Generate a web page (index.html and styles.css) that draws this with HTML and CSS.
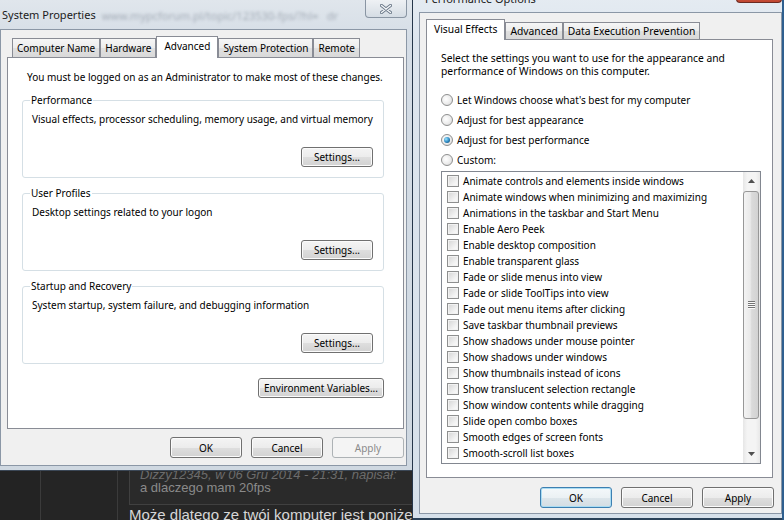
FILE: index.html
```html
<!DOCTYPE html>
<html lang="en">
<head>
  <meta charset="UTF-8" />
  <meta name="viewport" content="width=device-width, initial-scale=1.0" />
  <title>System Properties</title>
  <link rel="stylesheet" href="styles.css">
</head>
<body>
  <div class="desktop">
    <!-- forum page behind the dialogs -->
    <div class="forum">
      <div class="forum-col forum-col-a"></div>
      <div class="forum-col forum-col-b"></div>
      <div class="forum-post">
        <div class="quote">
          <p class="quote-by">Dizzy12345, w 06 Gru 2014 - 21:31, napisał:</p>
          <p class="quote-text">a dlaczego mam 20fps</p>
        </div>
        <p class="post-text">Może dlatego ze twój komputer jest poniżej normy</p>
      </div>
    </div>

    <!-- System Properties (inactive) -->
    <div class="win win-sys">
      <div class="titlebar">
        <span class="title">System Properties</span>
        <span class="glass-text">www.mypcforum.pl/topic/123530-fps/?hl=  &nbsp; dr</span>
        <span class="close close-inactive">
          <svg width="12" height="10" viewBox="0 0 12 10">
            <path d="M1.5 1.5 L10.5 8.5 M10.5 1.5 L1.5 8.5" stroke="#6b7888" stroke-width="3.2" stroke-linecap="round" fill="none"/>
            <path d="M1.5 1.5 L10.5 8.5 M10.5 1.5 L1.5 8.5" stroke="#f5f7f9" stroke-width="1.4" stroke-linecap="round" fill="none"/>
          </svg>
        </span>
      </div>
      <div class="client">
        <div class="tabs">
          <span class="tab">Computer Name</span>
          <span class="tab">Hardware</span>
          <span class="tab active">Advanced</span>
          <span class="tab">System Protection</span>
          <span class="tab">Remote</span>
        </div>
        <div class="panel panel-sys">
          <p class="note">You must be logged on as an Administrator to make most of these changes.</p>

          <fieldset class="group">
            <legend>Performance</legend>
            <p>Visual effects, processor scheduling, memory usage, and virtual memory</p>
            <div class="group-actions"><button class="btn">Settings...</button></div>
          </fieldset>

          <fieldset class="group">
            <legend>User Profiles</legend>
            <p>Desktop settings related to your logon</p>
            <div class="group-actions"><button class="btn">Settings...</button></div>
          </fieldset>

          <fieldset class="group">
            <legend>Startup and Recovery</legend>
            <p>System startup, system failure, and debugging information</p>
            <div class="group-actions"><button class="btn">Settings...</button></div>
          </fieldset>

          <div class="env-row"><button class="btn btn-wide">Environment Variables...</button></div>
        </div>
        <div class="dialog-buttons">
          <button class="btn btn-dlg">OK</button>
          <button class="btn btn-dlg">Cancel</button>
          <button class="btn btn-dlg" disabled>Apply</button>
        </div>
      </div>
    </div>

    <!-- Performance Options (active) -->
    <div class="win win-perf">
      <div class="titlebar">
        <span class="title">Performance Options</span>
        <span class="close close-active"></span>
      </div>
      <div class="client">
        <div class="tabs">
          <span class="tab active">Visual Effects</span>
          <span class="tab">Advanced</span>
          <span class="tab">Data Execution Prevention</span>
        </div>
        <div class="panel panel-perf">
          <p class="intro">Select the settings you want to use for the appearance and<br>performance of Windows on this computer.</p>

          <div class="options">
            <div class="option"><span class="radio"></span>Let Windows choose what's best for my computer</div>
            <div class="option"><span class="radio"></span>Adjust for best appearance</div>
            <div class="option"><span class="radio on"></span>Adjust for best performance</div>
            <div class="option"><span class="radio"></span>Custom:</div>
          </div>

          <div class="listbox">
            <div class="list-items">
              <div class="item"><span class="check"></span>Animate controls and elements inside windows</div>
              <div class="item"><span class="check"></span>Animate windows when minimizing and maximizing</div>
              <div class="item"><span class="check"></span>Animations in the taskbar and Start Menu</div>
              <div class="item"><span class="check"></span>Enable Aero Peek</div>
              <div class="item"><span class="check"></span>Enable desktop composition</div>
              <div class="item"><span class="check"></span>Enable transparent glass</div>
              <div class="item"><span class="check"></span>Fade or slide menus into view</div>
              <div class="item"><span class="check"></span>Fade or slide ToolTips into view</div>
              <div class="item"><span class="check"></span>Fade out menu items after clicking</div>
              <div class="item"><span class="check"></span>Save taskbar thumbnail previews</div>
              <div class="item"><span class="check"></span>Show shadows under mouse pointer</div>
              <div class="item"><span class="check"></span>Show shadows under windows</div>
              <div class="item"><span class="check"></span>Show thumbnails instead of icons</div>
              <div class="item"><span class="check"></span>Show translucent selection rectangle</div>
              <div class="item"><span class="check"></span>Show window contents while dragging</div>
              <div class="item"><span class="check"></span>Slide open combo boxes</div>
              <div class="item"><span class="check"></span>Smooth edges of screen fonts</div>
              <div class="item"><span class="check"></span>Smooth-scroll list boxes</div>
            </div>
            <div class="scrollbar">
              <div class="sb-arrow">
                <svg width="7" height="4" viewBox="0 0 7 4"><polygon points="0,4 3.5,0 7,4" fill="#505050"/></svg>
              </div>
              <div class="sb-thumb">
                <svg width="7" height="8" viewBox="0 0 7 8">
                  <path d="M0 0.5 H7 M0 2.5 H7 M0 4.5 H7 M0 6.5 H7" stroke="#747474" stroke-width="1"/>
                  <path d="M0 1.5 H7 M0 3.5 H7 M0 5.5 H7 M0 7.5 H7" stroke="#fafafa" stroke-width="1"/>
                </svg>
              </div>
              <div class="sb-track"></div>
              <div class="sb-arrow">
                <svg width="7" height="4" viewBox="0 0 7 4"><polygon points="0,0 3.5,4 7,0" fill="#505050"/></svg>
              </div>
            </div>
          </div>
        </div>
        <div class="dialog-buttons">
          <button class="btn btn-dlg btn-default">OK</button>
          <button class="btn btn-dlg">Cancel</button>
          <button class="btn btn-dlg">Apply</button>
        </div>
      </div>
    </div>
  </div>
</body>
</html>
```

FILE: styles.css
```css
* {
  box-sizing: border-box;
}
html, body {
  margin: 0;
  height: 100%;
}
body {
  font-family: "Noto Sans", "Open Sans", sans-serif;
  font-size: 10px;
  color: #000;
  background: #262626;
  overflow: hidden;
}
p {
  margin: 0;
}
.desktop {
  position: relative;
  width: 784px;
  height: 520px;
  overflow: hidden;
}

/* forum behind */
.forum {
  display: flex;
  height: 100%;
  font-family: "Liberation Sans", Arial, sans-serif;
}
.forum-col-a {
  width: 41px;
  background: #232323;
  border-right: 1px solid #3b3b3b;
}
.forum-col-b {
  width: 77px;
  background: #252525;
  border-right: 1px solid #3b3b3b;
}
.forum-post {
  flex: 1;
  padding: 460px 0 0 11px;
  white-space: nowrap;
}
.quote {
  border: 1px solid #404040;
  background: #2a2a2a;
  padding: 7px 10px 10px;
  font-size: 13px;
  line-height: 13px;
}
.quote-by {
  font-style: italic;
  color: #6c6c6c;
}
.quote-text {
  color: #8a8a8a;
}
.post-text {
  margin-top: 1px;
  font-size: 15px;
  line-height: 18px;
  color: #d6d6d6;
}

/* window frames */
.win {
  position: absolute;
  display: flex;
  flex-direction: column;
}
.win-sys {
  left: -6px;
  top: -1px;
  width: 419px;
  height: 472px;
  padding: 0 5px 4px 5px;
  border: 1px solid #3b4756;
  background: linear-gradient(#e0e6ec, #d5dde6 40px, #cfd8e1);
}
.win-perf {
  left: 412px;
  top: -18px;
  width: 372px;
  height: 545px;
  padding: 0 0 3px 6px;
  border: 1px solid #25364a;
  border-right: 2px solid #2e5f8f;
  border-bottom: 9px solid #2a4158;
  background: linear-gradient(#e7edf3, #dde5ee 60px, #d6e0ea);
}
.titlebar {
  display: flex;
  align-items: flex-start;
  height: 29px;
  flex: none;
}
.title {
  font-size: 11px;
  line-height: 15px;
  color: #1b1b1b;
  white-space: nowrap;
}
.win-sys .title {
  margin: 7px 0 0 2px;
}
.win-perf .title {
  margin: 8px 0 0 6px;
}
.glass-text {
  flex: 1;
  min-width: 0;
  overflow: hidden;
  margin: 8px 8px 0 6px;
  font-size: 11px;
  line-height: 15px;
  color: rgba(60, 72, 88, 0.35);
  filter: blur(1.4px);
  white-space: nowrap;
}
.close {
  margin-left: auto;
  flex: none;
  display: flex;
  align-items: center;
  justify-content: center;
  border-radius: 0 0 4px 4px;
}
.close-inactive {
  width: 42px;
  height: 18px;
  border: 1px solid #8995a3;
  border-top: none;
  background: linear-gradient(#eef1f4, #e2e7ec 50%, #d5dce4);
}
.close-active {
  width: 46px;
  height: 20px;
  border: 1px solid #6b2a22;
  border-top: none;
  background: linear-gradient(#e6a194, #cf6a58 50%, #c0452f);
}
.client {
  flex: none;
  border: 1px solid #8b97a6;
  background: #f0f0f0;
}
.win-sys .client {
  height: 437px;
  padding: 6px 2px 0 6px;
}
.win-perf .client {
  height: 502px;
  padding: 6px 8px 0 6px;
}

/* tabs */
.tabs {
  display: flex;
  align-items: flex-end;
  height: 21px;
  padding-left: 5px;
  position: relative;
  z-index: 1;
}
.win-perf .tabs {
  height: 20px;
  padding-left: 0;
  font-size: 10.3px;
}
.tab {
  height: 19px;
  line-height: 18px;
  padding: 0 4px;
  border: 1px solid #898c95;
  border-bottom: none;
  background: linear-gradient(#f6f6f6, #ececec 50%, #e0e0e0 51%, #d9d9d9);
  white-space: nowrap;
}
.tab.active {
  height: 22px;
  margin-bottom: -1px;
  padding: 0 7px;
  background: #fff;
}
.win-perf .tab {
  height: 17px;
  line-height: 16px;
  padding: 0 4px;
}
.win-perf .tab.active {
  height: 21px;
  line-height: 18px;
  padding: 0 7px;
}

.panel {
  border: 1px solid #898c95;
  background: #fff;
}
.panel-sys {
  height: 372px;
  padding: 12px 19px 0 14px;
}
.note {
  margin-left: 5px;
  line-height: 15px;
}

/* group boxes */
.group {
  margin: 8px 0 0;
  padding: 0 10px 10px 9px;
  min-width: 0;
  border: 1px solid #d5dfe5;
  border-radius: 3px;
}
.group legend {
  margin-left: -2px;
  padding: 0 1px;
  line-height: 15px;
}
.group p {
  margin-top: 4px;
  line-height: 15px;
}
.group-actions, .env-row {
  display: flex;
  justify-content: flex-end;
}
.group-actions {
  margin-top: 20px;
}
.env-row {
  margin-top: 14px;
}

/* buttons */
.btn {
  font: inherit;
  color: #000;
  width: 72px;
  height: 20px;
  padding: 0;
  border: 1px solid #707070;
  border-radius: 3px;
  background: linear-gradient(#f4f4f4, #ececec 50%, #dedede 51%, #d2d2d2);
  box-shadow: inset 0 0 0 1px #fbfbfb;
}
.btn-wide {
  width: 126px;
}
.btn-dlg {
  height: 21px;
}
.btn:disabled {
  color: #8a8a8a;
  border-color: #adb2b5;
  background: #f4f4f4;
  box-shadow: none;
}
.btn-default {
  border-color: #3c7fb1;
  box-shadow: inset 0 0 0 1px #a9dcf3;
  background: linear-gradient(#f4f8fa, #ebf1f4 50%, #dde6eb 51%, #d4dde3);
}
.dialog-buttons {
  display: flex;
  justify-content: flex-end;
  gap: 9px;
  margin-top: 8px;
}
.win-perf .dialog-buttons {
  margin-top: 9px;
  margin-right: -1px;
}

/* visual effects panel */
.panel-perf {
  padding: 12px 11px 13px 14px;
}
.intro {
  line-height: 13px;
  font-size: 10.3px;
}
.options {
  margin-top: 12px;
}
.option {
  display: flex;
  align-items: center;
  height: 20px;
  white-space: nowrap;
}
.radio {
  flex: none;
  width: 12px;
  height: 12px;
  margin-right: 4px;
  border: 1px solid #8e8f8f;
  border-radius: 50%;
  background: radial-gradient(circle at 40% 40%, #ffffff, #ececec 55%, #cfcfcf);
  display: flex;
  align-items: center;
  justify-content: center;
}
.radio.on::after {
  content: "";
  width: 6px;
  height: 6px;
  border-radius: 50%;
  background: radial-gradient(circle at 35% 35%, #9be4ff, #2a86c0 55%, #0b3656);
}
.listbox {
  display: flex;
  height: 293px;
  margin-top: 1px;
  border: 1px solid #828790;
  background: #fff;
}
.list-items {
  flex: 1;
  padding: 1px 0 0 5px;
  overflow: hidden;
}
.item {
  display: flex;
  align-items: center;
  height: 16px;
  white-space: nowrap;
}
.check {
  flex: none;
  width: 12px;
  height: 12px;
  margin-right: 4px;
  border: 1px solid #8e8f8f;
  background: linear-gradient(135deg, #d4d4d4, #f4f4f4 70%, #fbfbfb);
  box-shadow: inset 0 0 0 1px #f2f2f2;
}

/* scrollbar */
.scrollbar {
  flex: none;
  width: 17px;
  display: flex;
  flex-direction: column;
  background: linear-gradient(90deg, #e6e6e6, #f4f4f4 25%, #f4f4f4 75%, #e8e8e8);
}
.sb-arrow {
  height: 18px;
  flex: none;
  display: flex;
  align-items: center;
  justify-content: center;
}
.sb-thumb {
  flex: none;
  height: 228px;
  margin: 1px 1px 0 0;
  border: 1px solid #979797;
  border-radius: 3px;
  background: linear-gradient(90deg, #f3f3f3, #e9e9e9 45%, #dadada 55%, #d2d2d2);
  display: flex;
  align-items: center;
  justify-content: center;
}
.sb-track {
  flex: 1;
}
```
